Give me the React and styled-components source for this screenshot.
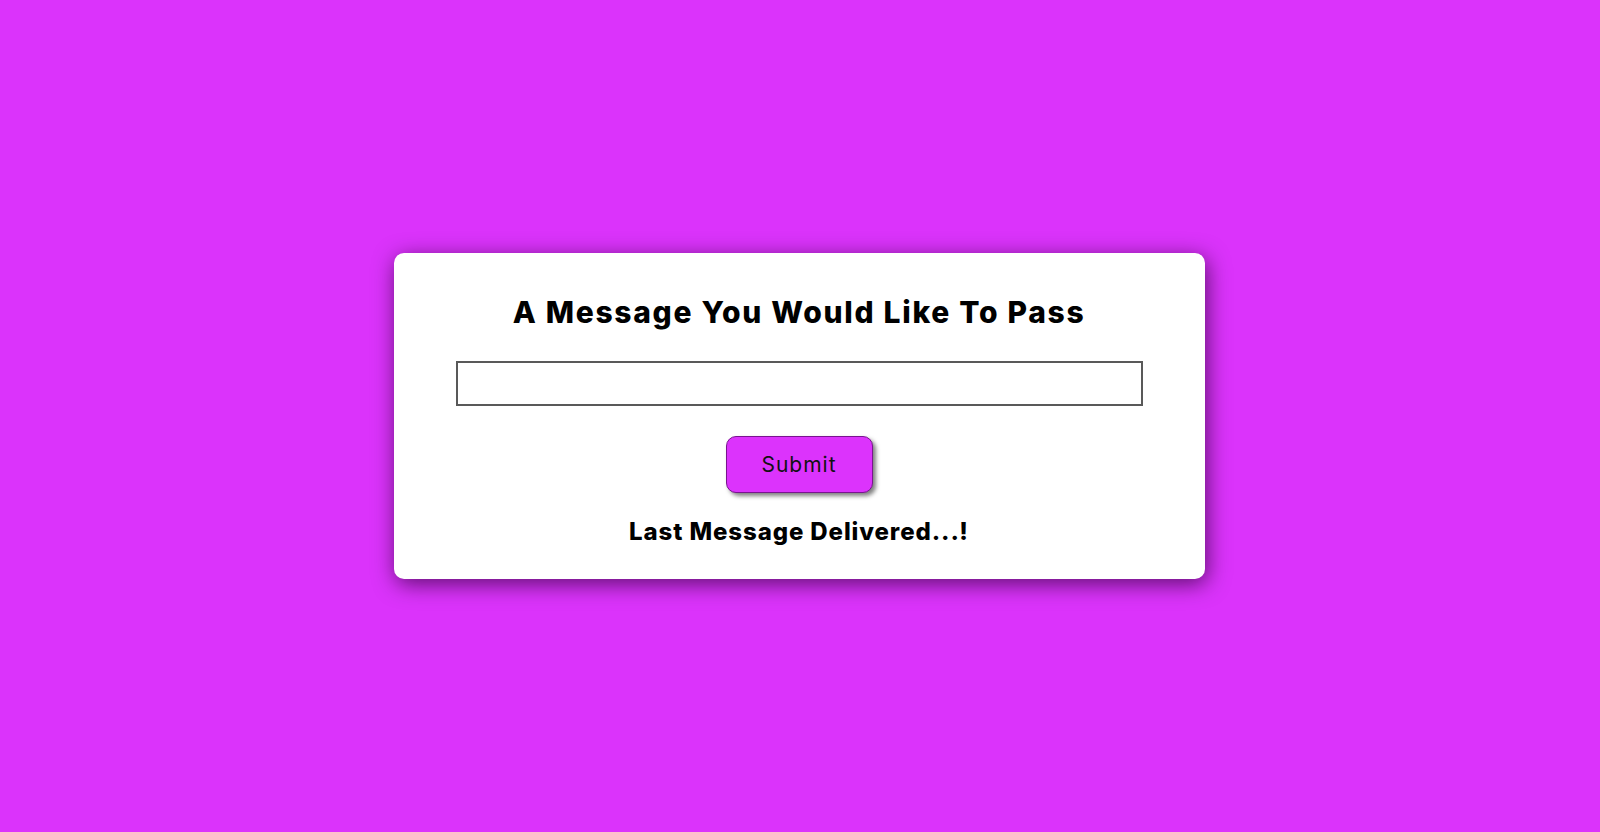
import React from "react";
import styled, { createGlobalStyle } from "styled-components";

const GlobalStyle = createGlobalStyle`
  * { box-sizing: border-box; }
  html, body { margin: 0; padding: 0; }
  body {
    background: #db33fb;
    font-family: Inter, "Noto Sans", "DejaVu Sans", sans-serif;
  }
`;

const Page = styled.main`
  min-height: 832px;
  display: flex;
  align-items: center;
  justify-content: center;
`;

const Card = styled.section`
  width: 811px;
  height: 326px;
  margin-left: -2px;
  background: #ffffff;
  border-radius: 10px;
  box-shadow: 2px 5px 22px rgba(40, 0, 50, 0.7);
  padding: 39px 62px 0 62px;
  display: flex;
  flex-direction: column;
  align-items: center;
`;

const Title = styled.h1`
  margin: 0;
  font-size: 30px;
  line-height: 40px;
  font-weight: 800;
  letter-spacing: 1.7px;
  color: #000;
  text-align: center;
`;

const Input = styled.input`
  margin-top: 29px;
  width: 687px;
  height: 45px;
  border: 2px solid #595959;
  border-radius: 0;
  background: #fff;
  font: inherit;
  font-size: 18px;
  padding: 0 10px;
  outline: none;
`;

const Button = styled.button`
  margin-top: 30px;
  width: 147px;
  height: 57px;
  background: #dc33fc;
  border: 1px solid #7a1490;
  border-radius: 10px;
  box-shadow: 3px 3px 4px rgba(0, 0, 0, 0.5);
  font-family: Inter, "Noto Sans", sans-serif;
  font-size: 21px;
  font-weight: 400;
  letter-spacing: 1px;
  color: #111;
  cursor: pointer;
`;

const Status = styled.h2`
  margin: 24px 0 0 0;
  font-size: 24px;
  line-height: 30px;
  font-weight: 800;
  letter-spacing: 0.9px;
  color: #000;
  text-align: center;
`;

export default function App() {
  return (
    <>
      <GlobalStyle />
      <Page>
        <Card>
          <Title>A Message You Would Like To Pass</Title>
          <Input type="text" />
          <Button type="button">Submit</Button>
          <Status>Last Message Delivered...!</Status>
        </Card>
      </Page>
    </>
  );
}
